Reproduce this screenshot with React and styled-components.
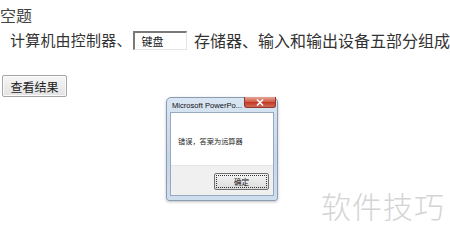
import React from "react";
import styled, { createGlobalStyle } from "styled-components";

const Global = createGlobalStyle`
  html, body { margin: 0; padding: 0; background: #fff; }
  body { font-family: "Noto Sans CJK SC", "Noto Sans", sans-serif; color: #333; }
`;

const Page = styled.div`
  position: relative;
  width: 450px;
  height: 241px;
  overflow: hidden;
  background: #fff;
`;

const Heading = styled.div`
  margin-top: 5px;
  height: 20px;
  line-height: 20px;
  font-size: 16px;
  color: #444;
  letter-spacing: 0px;
`;

const Sentence = styled.div`
  display: flex;
  align-items: center;
  height: 20px;
  margin-top: 5px;
  padding-left: 10px;
  white-space: nowrap;
`;

const Phrase = styled.span`
  font-size: ${(p) => p.$size}px;
  line-height: 20px;
  color: #333;
  letter-spacing: ${(p) => p.$spacing || 0}px;
`;

const Blank = styled.div`
  box-sizing: border-box;
  width: 55px;
  height: 19px;
  margin: 0 7px 0 1px;
  padding-left: 7px;
  border-top: 2px solid #7a7a7a;
  border-left: 2px solid #7a7a7a;
  border-right: 1px solid #e4e4e4;
  border-bottom: 1px solid #e4e4e4;
  font-size: 11px;
  line-height: 16px;
  color: #222;
  background: #fff;
`;

const CheckButton = styled.button`
  display: block;
  box-sizing: border-box;
  margin: 25px 0 0 2px;
  width: 65px;
  height: 22px;
  padding: 0;
  font-family: "Noto Sans CJK SC", sans-serif;
  font-size: 12px;
  color: #222;
  background: linear-gradient(#f6f6f6, #e3e3e3);
  border: 1px solid #a5a5a5;
  border-radius: 2px;
  box-shadow: inset 0 0 0 1px #fcfcfc;
`;

const Dialog = styled.div`
  position: absolute;
  left: 166px;
  top: 97px;
  width: 112px;
  height: 104px;
  box-sizing: border-box;
  border: 1px solid #8c9db3;
  border-radius: 5px 5px 3px 3px;
  background: linear-gradient(#d9e5f2, #c6d7ea 60%, #cfdeee);
  padding: 0 3px 4px 3px;
  display: flex;
  flex-direction: column;
  box-shadow: 0 1px 3px rgba(0, 0, 0, 0.25);
`;

const TitleBar = styled.div`
  height: 14px;
  display: flex;
  align-items: center;
  padding-left: 2px;
  font-family: "Liberation Sans", Arial, sans-serif;
  font-size: 7.6px;
  color: #111;
`;

const CloseButton = styled.div`
  position: absolute;
  right: 1px;
  top: -1px;
  width: 32px;
  height: 11px;
  box-sizing: border-box;
  border: 1px solid #8a3a30;
  border-top: none;
  border-radius: 0 0 3px 3px;
  background: linear-gradient(#e7a596, #d2604c 45%, #c23c28 55%, #d26a54);
  display: flex;
  align-items: center;
  justify-content: center;
`;

const Body = styled.div`
  flex: 1;
  display: flex;
  flex-direction: column;
  border: 1px solid #98a8be;
  background: #fff;
`;

const Message = styled.div`
  height: 52px;
  display: flex;
  align-items: center;
  padding: 4px 0 0 7px;
  box-sizing: border-box;
  font-size: 7.2px;
  color: #222;
  white-space: nowrap;
`;

const Footer = styled.div`
  flex: 1;
  background: #f0f0f0;
  border-top: 1px solid #e6e6e6;
  display: flex;
  justify-content: flex-end;
  align-items: flex-start;
  padding: 7px 4px 0 0;
`;

const OkButton = styled.div`
  width: 55px;
  height: 17px;
  box-sizing: border-box;
  border: 1px solid #707070;
  outline: 1px dotted #333;
  outline-offset: -3px;
  border-radius: 2px;
  background: linear-gradient(#f4f4f4, #dcdcdc);
  display: flex;
  align-items: center;
  justify-content: center;
  font-size: 7.5px;
  color: #111;
`;

const Watermark = styled.div`
  position: absolute;
  left: 321px;
  top: 187px;
  font-size: 30px;
  font-weight: 300;
  line-height: 36px;
  color: #d4d4d4;
  letter-spacing: 1px;
`;

export default function App() {
  return (
    <Page>
      <Global />
      <Heading>空题</Heading>
      <Sentence>
        <Phrase $size={15} $spacing={0.2}>计算机由控制器、</Phrase>
        <Blank>键盘</Blank>
        <Phrase $size={16}>存储器、输入和输出设备五部分组成</Phrase>
      </Sentence>
      <CheckButton>查看结果</CheckButton>
      <Dialog>
        <TitleBar>Microsoft PowerPo...</TitleBar>
        <CloseButton>
          <svg width="8" height="7" viewBox="0 0 8 7">
            <path d="M1 0.5 L7 6.5 M7 0.5 L1 6.5" stroke="#fff" strokeWidth="1.6" />
          </svg>
        </CloseButton>
        <Body>
          <Message>错误，答案为运算器</Message>
          <Footer>
            <OkButton>确定</OkButton>
          </Footer>
        </Body>
      </Dialog>
      <Watermark>软件技巧</Watermark>
    </Page>
  );
}
